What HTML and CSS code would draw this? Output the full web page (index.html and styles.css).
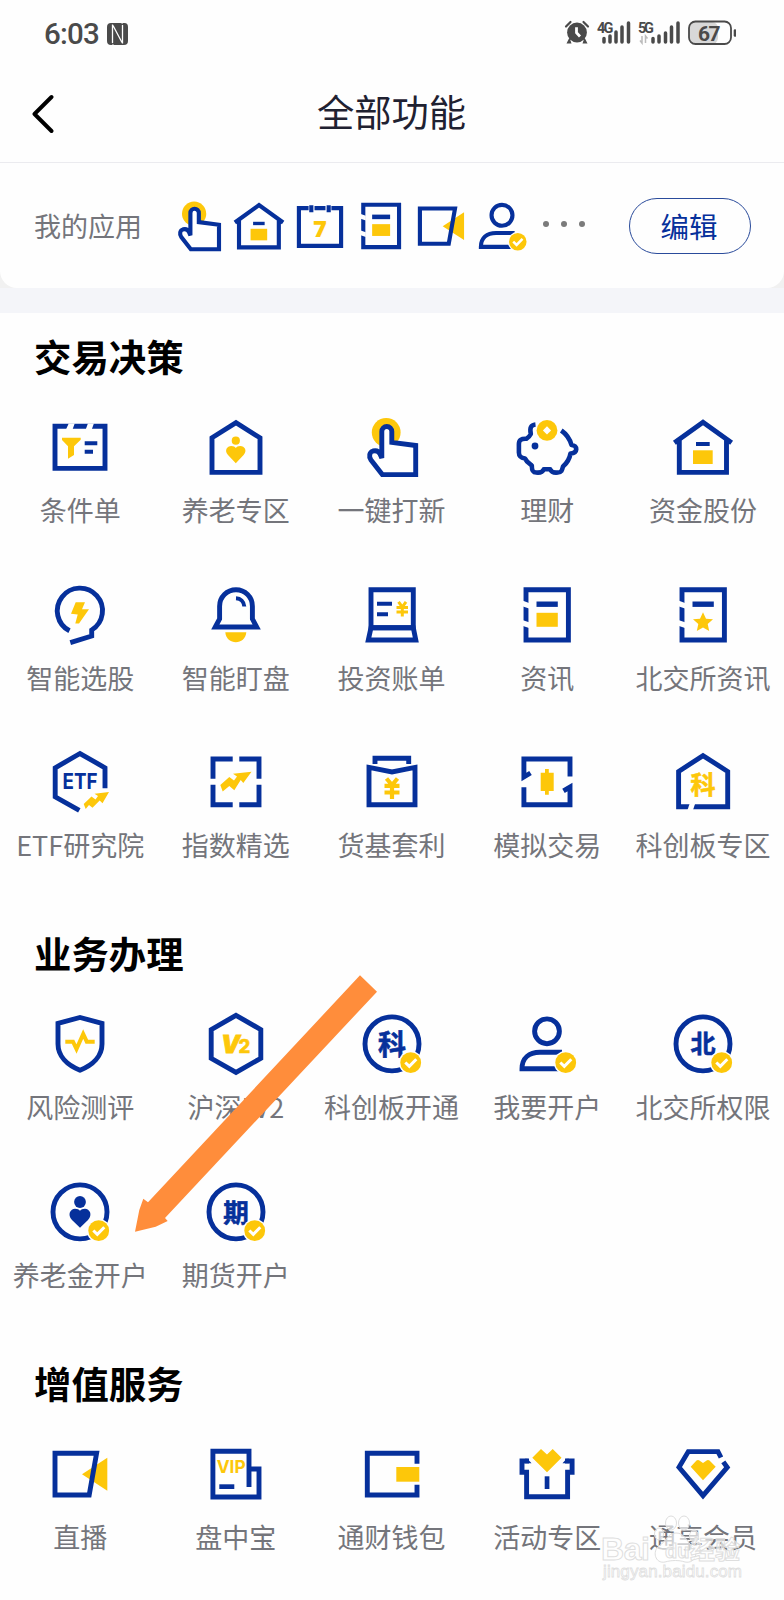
FILE: index.html
```html
<!DOCTYPE html>
<html lang="zh-CN">
<head>
<meta charset="utf-8">
<title>全部功能</title>
<link rel="stylesheet" href="styles.css">
</head>
<body>
<svg class="defs" width="0" height="0">
  <symbol id="badge" viewBox="0 0 64 64">
    <circle class="wf" cx="50.7" cy="50.7" r="11.8"/><circle class="yf" cx="50.7" cy="50.7" r="10.4"/>
    <path class="tick" d="M45.3 50.5l4 3.9 7-7.2"/>
  </symbol>
  <symbol id="hand" viewBox="0 0 64 64">
    <circle class="yf" cx="26.2" cy="17.5" r="14.4"/>
    <path class="b wf" d="M21.8 43V16.5a5 5 0 0 1 10 0V27.4L55.7 30.5V59.6H22.3L11 45C8.5 41.5 9.5 37 13 36C17 35 19 36.8 20 39z"/>
  </symbol>
  <symbol id="house" viewBox="0 0 64 64">
    <path class="b" d="M3.4 27.8L32 7.3L60.6 27.8M8.3 25V57.4H55.5V25"/>
    <path class="bf" d="M25 27h13.7v4H25z"/><path class="yf" d="M22 35.3h19.7V49H22z"/>
  </symbol>
  <symbol id="book" viewBox="0 0 64 64">
    <path class="b" d="M11 6.8H53.4V57H11z"/><path class="bf" d="M21.5 18.5h21.3v5.4H21.5z"/>
    <path class="wf" d="M8 17.8L14 19.9V25.6L8 23.5zM8 37.2L14 39.3V45L8 42.9z"/>
  </symbol>
  <symbol id="video" viewBox="0 0 64 64">
    <path class="yf" d="M34 32.2L59.3 15.7V48.7z"/><path class="b" d="M7 11.3H48.6L41.2 53H7z"/>
  </symbol>
  <symbol id="person" viewBox="0 0 64 64">
    <circle class="b" cx="32" cy="19.3" r="12.4"/>
    <path class="b" d="M47 40.3H25C14 40.3 7 46 7 56.8H44"/><use href="#badge"/>
  </symbol>
  <symbol id="ring" viewBox="0 0 64 64"><circle class="b" cx="32" cy="31.9" r="27"/></symbol>
</svg>

<div class="screen">
  <header class="status">
    <div class="status-left">
      <span class="time">6:03</span>
      <svg class="nfc" width="21" height="22" viewBox="0 0 21 22">
        <path d="M4 0H14L17 2V22H15.500L5.500 4.500V22H4a4 4 0 0 1-4-4V4a4 4 0 0 1 4-4z" fill="#4a4a4a"/>
        <path d="M17.500 0a3.500 4 0 0 1 3.500 4V18a4 4 0 0 1-4 4H7L4.500 20V0H6L15.500 17V0z" fill="#4a4a4a"/>
        <path d="M5.500 1.500V20M15.500 2V20.500M6 2.500L15 19.500" stroke="#fff" stroke-width="1.300" fill="none"/>
      </svg>
    </div>
    <svg class="status-right" width="176" height="28" viewBox="0 0 176 28">
      <g fill="#4a4a4a">
        <circle cx="17" cy="13.5" r="9.9"/>
        <path d="M9.5 18.5L6.500 24.5h5zM24.5 18.5L27.500 24.5h-5z"/>
        <path d="M6 7.5L10.5 3M28 7.5L23.5 3" stroke="#4a4a4a" stroke-width="2.2" stroke-linecap="round"/>
        <path d="M16.500 8.200v5.500l3.500 3.800" stroke="#fff" stroke-width="2.800" fill="none"/>
        <text class="net" x="37" y="13.500" textLength="16.500">4G</text>
        <text class="net" x="78" y="13.500" textLength="16">5G</text>
      </g>
      <path d="M44 19.5V23M50 17V23M56 13V23M62 8V23M68.500 4V23M93 19.500V23M99 17V23M105.500 14V23M111.500 8V23M118 4V23" stroke="#4a4a4a" stroke-width="3.500" stroke-linecap="round"/>
      <path d="M82 17v7l-2-2.500M85.500 24v-7l2 2.500" stroke="#bbb" stroke-width="1.500" fill="none"/>
      <rect x="129" y="3" width="29" height="22" rx="6" fill="#d8d8d8"/>
      <rect x="129" y="2.500" width="42" height="22.500" rx="6.500" fill="none" stroke="#4a4a4a" stroke-width="1.800"/>
      <path d="M175 11.500v5" stroke="#4a4a4a" stroke-width="2.600" stroke-linecap="round"/>
      <text class="level" x="138" y="21.500" textLength="22.500">67</text>
    </svg>
  </header>

  <nav class="titlebar">
    <svg width="24" height="42" viewBox="0 0 24 42"><path d="M21.500 4L4.500 21L21.500 38" fill="none" stroke="#000" stroke-width="3.900" stroke-linecap="round" stroke-linejoin="round"/></svg>
    <h1>全部功能</h1>
  </nav>

  <div class="band">
    <div class="mine">
      <span class="mine-label">我的应用</span>
      <div class="mine-icons">
        <svg viewBox="0 0 64 64"><use href="#hand"/></svg>
        <svg viewBox="0 0 64 64"><use href="#house"/></svg>
        <svg viewBox="0 0 64 64"><path class="b" d="M18.500 10.800H7V55.500H57V10.800H45.500M25.500 10.800H38.500"/><path class="b" d="M21.700 7.300V15.700M42.300 7.300V15.700"/><text class="yf t7" x="32" y="44.800">7</text></svg>
        <svg viewBox="0 0 64 64"><use href="#book"/><path class="yf" d="M21.500 29.800h21.300V43.800H21.500z"/></svg>
        <svg viewBox="0 0 64 64"><use href="#video"/></svg>
        <svg viewBox="0 0 64 64"><use href="#person"/></svg>
      </div>
      <div class="dots"><i></i><i></i><i></i></div>
      <button class="edit">编辑</button>
    </div>
  </div>

  <section>
    <h2>交易决策</h2>
    <div class="grid">
      <div class="cell"><svg viewBox="0 0 64 64"><path class="b" d="M7 11.300H57V53.400H7z"/><path class="wf" d="M20.700 8.500h6l-2 5.500h-6.500zM39.900 8.500h6l-2 5.500h-6z"/><path class="yf" d="M14 22.700H32.700V24.700L26 31.200V40L20 43.700V31.200L14 25z"/><path class="b thin" d="M36.700 28.300H49.300M36.700 36.700H45"/></svg><span>条件单</span></div>
      <div class="cell"><svg viewBox="0 0 64 64"><path class="b" d="M8 22.800L32 7.700L56 22.800V57.400H8z"/><circle class="yf" cx="31.800" cy="25.700" r="4.100"/><path class="yf" d="M31.800 48.300L24 40C20 35.500 23 31 27.300 31C29.500 31 31 31.800 31.800 33C32.600 31.800 34 31 36.300 31C40.600 31 43.600 35.500 39.600 40z"/></svg><span>养老专区</span></div>
      <div class="cell"><svg viewBox="0 0 64 64"><use href="#hand"/></svg><span>一键打新</span></div>
      <div class="cell"><svg viewBox="0 0 64 64"><path class="b pig" d="M20.500 9.500C16 10 14.500 12.500 15.800 19C14.500 21.500 13 23 11.500 23.800C6 23.500 3.900 25 3.900 29V37.500C3.900 41.500 6 42.800 10 43.500C11.500 47 14 48.500 16.800 50.500C16.800 55.500 17.500 57.500 21 57.500C25 58 27.500 57.500 28.800 54.300H35.200C36.500 57.500 39 58 43 57.500C46.500 57.500 47 55.500 48 51.500C52 48 54.500 44.500 55.500 38.500C63 38 63 30.500 56.500 30C55 24.500 52 19.500 46.300 15.500"/><circle class="bf" cx="20" cy="31" r="3.400"/><circle class="yf" cx="32" cy="15.400" r="10.400"/><path class="wf" d="M32 11.300l4.100 4.100-4.100 4.100-4.100-4.100z"/></svg><span>理财</span></div>
      <div class="cell"><svg viewBox="0 0 64 64"><use href="#house"/></svg><span>资金股份</span></div>

      <div class="cell"><svg viewBox="0 0 64 64"><path class="b" d="M21.500 47.800A22.600 22.600 0 1 1 43.700 47V53L22.300 59.600"/><path class="yf" d="M27.700 19.200H37L34 26.200H41L31 40.500H27.300L29.700 31.500L23 30.800z"/></svg><span>智能选股</span></div>
      <div class="cell"><svg viewBox="0 0 64 64"><path class="b" d="M11.300 44L15.600 36V23.200A16.400 16.400 0 0 1 48.400 23.200V36L52.700 44z"/><path class="b thin" d="M32 15.300C36.500 15.500 40 18.500 40.300 23.500"/><path class="yf" d="M21.300 49.200H42.300C41.500 62.500 22.100 62.500 21.300 49.200z"/></svg><span>智能盯盘</span></div>
      <div class="cell"><svg viewBox="0 0 64 64"><path class="b" d="M11 44.800V6.800H53.300V44.800z"/><path class="b" d="M11 44.800H53.300L55.800 57H8.300z"/><path class="b thin" d="M17 20.800H32M17 31.200H28"/><path class="yen-sm" d="M38.500 18.800L42.300 24L46 18.800M36.500 24.500H48M36.500 29H48M42.300 24V33.500"/></svg><span>投资账单</span></div>
      <div class="cell"><svg viewBox="0 0 64 64"><use href="#book"/><path class="yf" d="M21.500 29.800h21.300V43.800H21.500z"/></svg><span>资讯</span></div>
      <div class="cell"><svg viewBox="0 0 64 64"><use href="#book"/><path class="yf" d="M32 29.300L35 35.800L42 36.300L36.700 41L38.200 48L32 44.600L25.800 48L27.300 41L22 36.300L29 35.800z"/></svg><span>北交所资讯</span></div>

      <div class="cell"><svg viewBox="0 0 64 64"><path class="b" d="M57 38.300V17.800L32 3.500L7.200 17.800V46.800L31.300 60.300"/><text class="bt" x="14.500" y="39.300" font-size="21.500" textLength="35" lengthAdjust="spacingAndGlyphs">ETF</text><path class="yf" d="M35.700 54L43.500 46.500L47.500 49.500L50 46L46.500 43.800L61 42L54.500 53.300L51.700 50.500L44.500 57.700L41 55L37.700 59z"/></svg><span>ETF研究院</span></div>
      <div class="cell"><svg viewBox="0 0 64 64"><path class="b" d="M28.700 9H9V28.700M35.300 9H55V28.700M9 34.700V54.800H28.700M55 34.700V54.800H35.300"/><path class="yf" d="M16.300 35L25.300 27L30 30.500L33 26.500L29 23.800L47.500 21.700L39.300 33L36.700 30L30.300 40.200L25.300 36L18.700 41.500z"/></svg><span>指数精选</span></div>
      <div class="cell"><svg viewBox="0 0 64 64"><path class="b" d="M9 17.400L32 22L55 17.400V54.700H9zM15 14V8.300H48.700V14"/><path class="yen-lg" d="M26.500 28.500L32 35L37.500 28.500M24.500 35.800H39.500M24.500 42.500H39.500M32 35V49"/></svg><span>货基套利</span></div>
      <div class="cell"><svg viewBox="0 0 64 64"><path class="b" d="M55 26.600V9H8.900V27L15.500 23M8.900 37.300V54.800H55V37L48.500 40.800"/><path class="yf" d="M25.700 22.700H30V19H33.800V22.700H38.700V41H33.800V44.700H30V41H25.700z"/></svg><span>模拟交易</span></div>
      <div class="cell"><svg viewBox="0 0 64 64"><path class="b" d="M7.600 21.500L32 5.600L56.700 21.500V56.700H7.600z"/><path class="wf" d="M18.500 54h5.500l-2 6h-5.500z"/><text class="yf zh zh-y" x="32" y="43.700" font-size="25">科</text></svg><span>科创板专区</span></div>
    </div>
  </section>

  <section>
    <h2>业务办理</h2>
    <div class="grid">
      <div class="cell"><svg viewBox="0 0 64 64"><path class="b" d="M10 11.400L32 5.500L54 11.400V32C54 44 45 53 32 58.200C19 53 10 44 10 32z"/><path class="y" d="M17.300 29.700H25L28.500 37L35.200 22L38.800 29.700H46.700"/></svg><span>风险测评</span></div>
      <div class="cell"><svg viewBox="0 0 64 64"><path class="b" d="M32 3.300L56.800 17.600V46.300L32 60.500L7.200 46.300V17.600z"/><text class="yf vt" x="17" y="41" font-size="24">V</text><text class="yf vt2" x="34.500" y="41.300" font-size="18.500">2</text></svg><span>沪深LV2</span></div>
      <div class="cell"><svg viewBox="0 0 64 64"><use href="#ring"/><text class="bf zh" x="32" y="42.700" font-size="28">科</text><use href="#badge"/></svg><span>科创板开通</span></div>
      <div class="cell"><svg viewBox="0 0 64 64"><use href="#person"/></svg><span>我要开户</span></div>
      <div class="cell"><svg viewBox="0 0 64 64"><use href="#ring"/><text class="bf zh" x="32" y="41.300" font-size="25">北</text><use href="#badge"/></svg><span>北交所权限</span></div>
      <div class="cell"><svg viewBox="0 0 64 64"><use href="#ring"/><circle class="bf" cx="32" cy="22" r="5.900"/><path class="bf" d="M32 47.700L24 40C19 34.500 22.500 28.700 27 28.700C29.500 28.700 31 29.500 32 30.700C33 29.500 34.500 28.700 37 28.700C41.500 28.700 45 34.500 40 40z"/><use href="#badge"/></svg><span>养老金开户</span></div>
      <div class="cell"><svg viewBox="0 0 64 64"><use href="#ring"/><text class="bf zh" x="32" y="42" font-size="25.500">期</text><use href="#badge"/></svg><span>期货开户</span></div>
    </div>
  </section>

  <section>
    <h2>增值服务</h2>
    <div class="grid">
      <div class="cell"><svg viewBox="0 0 64 64"><use href="#video"/></svg><span>直播</span></div>
      <div class="cell"><svg viewBox="0 0 64 64"><path class="b" d="M45 45V9.200H8.900V55H55V27H45"/><text class="yf vip" x="12.700" y="31.300" font-size="18" textLength="29" lengthAdjust="spacingAndGlyphs">VIP</text><path class="bf" d="M15.300 42.300h15V47h-15z"/></svg><span>盘中宝</span></div>
      <div class="cell"><svg viewBox="0 0 64 64"><path class="b" d="M57 21.800V11.300H7.300V53H57V42.700"/><path class="yf" d="M36.300 25H59.300V39.700H36.300z"/></svg><span>通财钱包</span></div>
      <div class="cell"><svg viewBox="0 0 64 64"><path class="b" d="M14 19H7V30.300H11.600V54.800H52.600V30.300H57.100V19H50"/><path class="bf" d="M10 16.700h2.500l4 4.600H10zM54 16.700h-2.500l-4 4.600H54z"/><path class="yf" d="M17.300 15.700L26 7L32 12.500L37.700 7L46.500 15.700L32 30.300z"/><path class="bf" d="M29.700 34.300h4.700V47h-4.700z"/></svg><span>活动专区</span></div>
      <div class="cell"><svg viewBox="0 0 64 64"><path class="b" d="M50 15.500L47 9.600H17.300L8 25.300L32 53.700L56.200 25.300L52.300 19.800"/><path class="yf" d="M19.700 24.700L25.500 18.500Q26.500 17.700 28 18.200L32 21L36 18.200Q37.500 17.700 38.500 18.500L44.700 24.700L32 38.300z"/></svg><span>通享会员</span></div>
    </div>
  </section>

  <svg class="arrow" width="784" height="1600" viewBox="0 0 784 1600"><path fill="#ff8d3b" d="M360 975.300L377 991.700L165 1218L167.700 1221L155.700 1226.700L135 1231.700L139.300 1210L143.300 1198.700L148 1202.300z"/></svg>

  <svg class="watermark" width="150" height="76" viewBox="0 0 150 76">
    <g class="wm">
      <ellipse cx="63" cy="25" rx="4.500" ry="6"/><ellipse cx="75" cy="14" rx="5.500" ry="7"/><ellipse cx="88" cy="14" rx="5.500" ry="7"/><ellipse cx="98" cy="27" rx="4.500" ry="6"/>
      <path d="M80 24C71 24 70 33 63 37C56 42 59 55 69 53C76 51 83 51 89 53C100 55 103 42 96 37C90 32 89 24 80 24z"/>
      <text x="5" y="50.500" font-size="32" textLength="49">Bai</text>
      <text x="69" y="49" font-size="20">du</text>
      <text class="wm-zh" x="94" y="50" font-size="25">经验</text>
      <text class="url" x="7" y="68" font-size="17" textLength="139">jingyan.baidu.com</text>
    </g>
  </svg>
</div>
</body>
</html>
```
FILE: styles.css
```css
* { box-sizing: border-box; }
body { margin: 0; background: #fff; font-family: "Noto Sans CJK SC", sans-serif; }
.defs { position: absolute; }
.screen { position: relative; width: 784px; height: 1600px; overflow: hidden; background: #fefefe; }

.b { fill: none; stroke: #06309b; stroke-width: 4.9; }
.b.wf { fill: #fff; }
.b.thin { stroke-width: 4; }
.b.pig { stroke-width: 4.6; stroke-linejoin: round; }
.bf { fill: #06309b; }
.yf { fill: #fdc70a; }
.y { fill: none; stroke: #fdc70a; stroke-width: 4; }
.wf { fill: #fefefe; }
.tick { fill: none; stroke: #fff; stroke-width: 3; }
.zh { font-weight: 700; text-anchor: middle; stroke: #06309b; stroke-width: .6; }
.zh-y { stroke: #fdc70a; }
.t7 { font: 800 28px "Open Sans", sans-serif; text-anchor: middle; }
.yen-sm { fill: none; stroke: #fdc70a; stroke-width: 3; }
.yen-lg { fill: none; stroke: #fdc70a; stroke-width: 4.2; }
.bt { fill: #06309b; font-family: Inter, sans-serif; font-weight: 700; }
.vip { font-family: Inter, sans-serif; font-weight: 700; }
.vt { font-family: Inter, sans-serif; font-weight: 900; font-style: italic; stroke: #fdc70a; stroke-width: .8; }
.vt2 { font-family: Inter, sans-serif; font-weight: 800; stroke: #fdc70a; stroke-width: .5; }

.status { display: flex; justify-content: space-between; align-items: flex-start; height: 66px; padding: 19px 48px 0 44px; }
.status-left { display: flex; align-items: center; gap: 8px; height: 29px; }
.time { font: 500 29.500px/29px Roboto, sans-serif; color: #4a4a4a; letter-spacing: -.8px; padding-top: 1px; }
.net { font: 700 14.500px Roboto, sans-serif; }
.level { font: 700 21px Roboto, sans-serif; fill: #4a4a4a; }

.titlebar { display: grid; grid-template-columns: 52px 1fr 52px; align-items: center; height: 97px; padding: 0 31px 1px 30px; border-bottom: 1px solid #ebebef; }
.titlebar h1 { margin: 0; padding-bottom: 6px; text-align: center; font-size: 37.300px; font-weight: 400; line-height: 54px; color: #1f2131; }

.band { height: 150px; padding-bottom: 25px; background: linear-gradient(#f1f1f1 125px, #f4f5f9 125px); }
.mine { display: flex; align-items: center; height: 125px; padding: 0 33px 0 34px; background: #fefefe; border-radius: 0 0 17px 17px; }
.mine-label { width: 137.500px; font-size: 27px; line-height: 36px; color: #74757b; }
.mine-icons { display: flex; gap: 6.700px; }
.mine-icons svg { width: 54px; height: 54px; }
.dots { display: flex; gap: 11.800px; margin: -4px 0 0 14px; }
.dots i { width: 6px; height: 6px; border-radius: 50%; background: #7b7b7b; }
.edit { width: 122px; height: 56px; margin-left: auto; padding: 0 2px 0 0; border: 1.300px solid #2a4b9b; border-radius: 28px; background: none; color: #06309b; font: 400 28.500px/50px "Noto Sans CJK SC", sans-serif; }

section { padding-bottom: 48.300px; }
h2 { height: 102px; margin: 0; padding: 16px 34px 0; font-size: 37.400px; line-height: 54px; font-weight: 700; color: #000; }
.grid { display: grid; grid-template-columns: repeat(5, 1fr); grid-auto-rows: 112px; row-gap: 55.600px; padding: 0 3.200px 0 2.300px; }
.cell { display: flex; flex-direction: column; align-items: center; gap: 15px; }
.cell svg { width: 64px; height: 64px; }
.cell span { font-size: 27px; line-height: 32px; color: #74757b; white-space: nowrap; }

.arrow { position: absolute; left: 0; top: 0; }
.watermark { position: absolute; left: 596px; top: 1509px; }
.wm { fill: #fff; fill-opacity: .65; stroke: #dedede; stroke-width: 1; font-family: "Liberation Sans", sans-serif; font-weight: 700; }
.wm-zh { font-family: "Noto Sans CJK SC", sans-serif; }
.url { font-weight: 400; stroke-width: .8; }
```
